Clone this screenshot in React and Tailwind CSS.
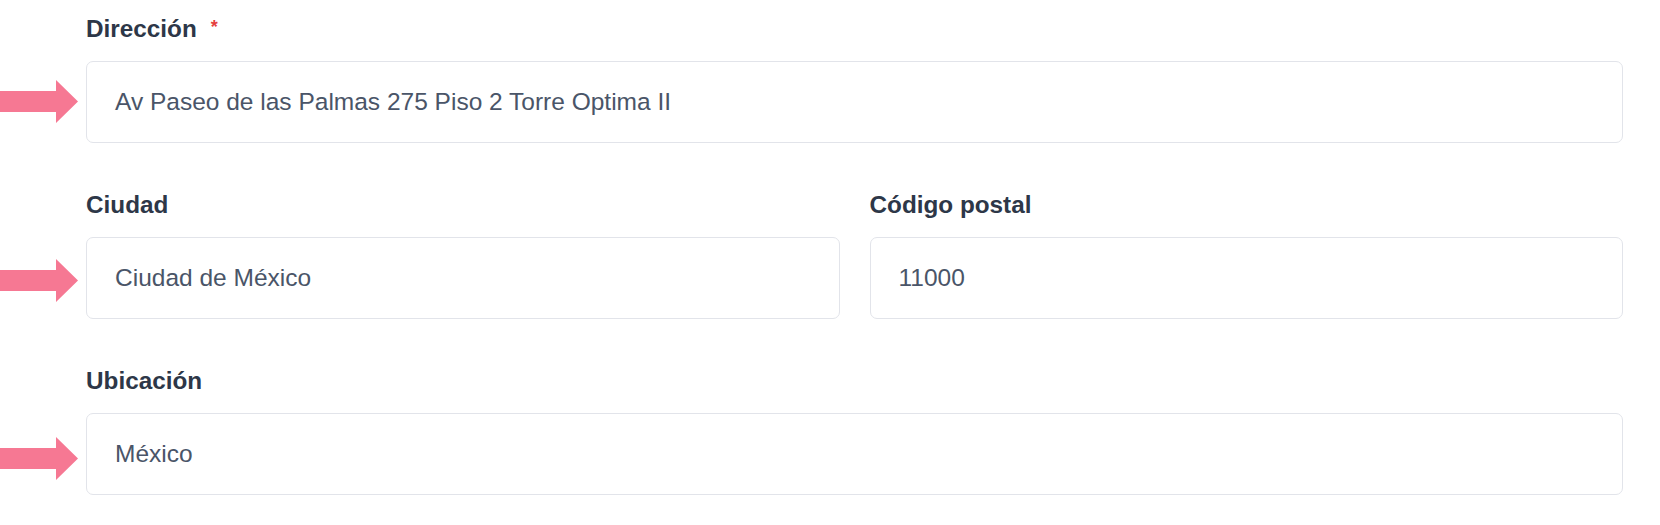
import React from 'react';

function Arrow({ top }) {
  return (
    <svg
      className="absolute left-[-86px]"
      style={{ top }}
      width="80"
      height="44"
      viewBox="0 0 80 44"
    >
      <polygon points="0,11 56,11 56,0 78,21.5 56,43 56,32 0,32" fill="#f67893" />
    </svg>
  );
}

function Field({ label, value, required, arrow }) {
  return (
    <div className="relative flex flex-col">
      <label className="h-[36px] leading-[36px] mb-[14px] text-[24.3px] font-bold text-[#2d3748] flex items-center">
        {label}
        {required ? <span className="ml-[14px] text-[18px] text-[#e53e3e] self-start mt-[-2px]">*</span> : null}
      </label>
      <div className="relative">
        {arrow !== undefined ? <Arrow top={arrow} /> : null}
        <div className="h-[82px] flex items-center border-[1.5px] border-[#e2e4ea] rounded-[7px] bg-white pl-[28px] text-[24.5px] text-[#4a5568]">
          {value}
        </div>
      </div>
    </div>
  );
}

export default function App() {
  return (
    <div
      className="w-[1660px] h-[525px] bg-white pt-[11px] pl-[86px] pr-[37px]"
      style={{ fontFamily: '"Liberation Sans", Arial, sans-serif' }}
    >
      <div className="flex flex-col gap-[44px]">
        <Field label="Dirección" value="Av Paseo de las Palmas 275 Piso 2 Torre Optima II" required arrow={19} />
        <div className="grid grid-cols-2 gap-[30px]">
          <Field label="Ciudad" value="Ciudad de México" arrow={22} />
          <Field label="Código postal" value="11000" />
        </div>
        <Field label="Ubicación" value="México" arrow={24} />
      </div>
    </div>
  );
}
